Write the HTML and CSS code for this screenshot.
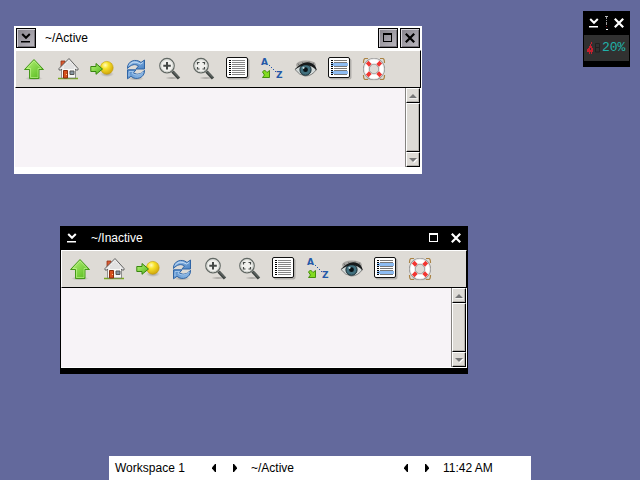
FILE: index.html
```html
<!DOCTYPE html>
<html lang="en">
<head>
<meta charset="utf-8">
<title>Desktop</title>
<link rel="stylesheet" href="styles.css">
</head>
<body>
<svg class="sprites" aria-hidden="true">
  <defs>
    <linearGradient id="green" x1="0" y1="0" x2="1" y2="1"><stop offset="0" stop-color="#b9f57c"/><stop offset="1" stop-color="#4fb516"/></linearGradient>
    <radialGradient id="gold" cx=".38" cy=".3" r=".75"><stop offset="0" stop-color="#fffbc0"/><stop offset=".35" stop-color="#f8e32c"/><stop offset="1" stop-color="#cda008"/></radialGradient>
    <linearGradient id="blue" x1="0" y1="0" x2="1" y2="1"><stop offset="0" stop-color="#9cc4ec"/><stop offset="1" stop-color="#4a83c4"/></linearGradient>
    <radialGradient id="shade"><stop offset="0" stop-color="#000" stop-opacity=".3"/><stop offset="1" stop-color="#000" stop-opacity="0"/></radialGradient>
  </defs>
  <symbol id="up" viewBox="0 0 24 24">
    <ellipse cx="12" cy="21.500" rx="9" ry="2" fill="url(#shade)"/>
    <path d="M12 2.500 21.500 12.500H17V21.500H7.500V12.500H2.500Z" fill="url(#green)" stroke="#45981a" stroke-linejoin="round"/>
    <path d="M12 4 19 11.500H16V20.500H8.500V11.500H5Z" fill="none" stroke="#d4ffa6" stroke-opacity=".5"/>
  </symbol>
  <symbol id="home" viewBox="0 0 24 24">
    <path d="M2 21.500H22" stroke="#79a820" stroke-width="1.500"/>
    <path d="M5 4h4v7H5z" fill="#d85a32" stroke="#913216" stroke-width=".8"/>
    <path d="M5.500 11 12.500 4 19.500 11v10h-14z" fill="#f7f7f5" stroke="#777" stroke-width=".8"/>
    <path d="M13 1.500 3 11.500v1.500h2l8-7.500 7 7.500h2v-1.500z" fill="#e7e7e7" stroke="#555" stroke-width=".9" stroke-linejoin="round"/>
    <path d="M13 3 6 10.500v1.500h13.500v-1.500z" fill="#ededed"/>
    <path d="M11 6v6M13 4v8M15 6v6M17 8v4M9 8v4" stroke="#c8c8c8" stroke-width=".6"/>
    <path d="M7.500 13.500h4v7.500h-4z" fill="#d7501c" stroke="#8c2d0c"/>
    <path d="M14 14h4v3.500h-4z" fill="#8796a2" stroke="#555"/>
    <circle cx="10.500" cy="17.500" r=".6" fill="#ffe49a"/>
  </symbol>
  <symbol id="goto" viewBox="0 0 24 24">
    <ellipse cx="17" cy="17" rx="7" ry="3" fill="url(#shade)"/>
    <circle cx="16.800" cy="10.800" r="6.400" fill="url(#gold)" stroke="#c3a009" stroke-width=".6"/>
    <path d="M.800 9.500H6V6.500L12.500 12 6 17.300V14.500H.800Z" fill="url(#green)" stroke="#38850f" stroke-linejoin="round"/>
  </symbol>
  <symbol id="refresh" viewBox="0 0 24 24">
    <ellipse cx="12" cy="21.500" rx="8" ry="2" fill="url(#shade)"/>
    <path id="curl" d="M3.500 11.500C3 4 12 1 17 5.500L20.500 3V12H12L14.500 9C11 6.500 7 7.500 3.500 11.500Z" fill="url(#blue)" stroke="#2f64a5" stroke-linejoin="round"/>
    <path d="M5 8.500Q9 2.500 16.500 7L19 5.500" fill="none" stroke="#d7e9fb" stroke-width=".8"/>
    <use href="#curl" transform="rotate(180 12 12.400)"/>
    <path d="M5 19V14.500H9.500L8 16.500Q14 20 19 15" fill="none" stroke="#b3d2f2" stroke-width=".8"/>
  </symbol>
  <symbol id="lens" viewBox="0 0 24 24">
    <ellipse cx="14" cy="21" rx="7" ry="1.500" fill="url(#shade)"/>
    <path d="M14.500 14.500 21 21.500" stroke="#3e4441" stroke-width="3.200"/>
    <path d="M15 14.500 21 20.500" stroke="#818986" stroke-width=".8"/>
    <circle cx="9" cy="8.700" r="7.200" fill="#f0f0ed" stroke="#626864" stroke-width="1.300"/>
    <circle cx="9" cy="8.700" r="6.100" fill="none" stroke="#d0d3ce"/>
  </symbol>
  <symbol id="zoom-in" viewBox="0 0 24 24">
    <use href="#lens"/><path d="M9 5v7.500M5.300 8.800h7.500" stroke="#444846" stroke-width="2"/>
  </symbol>
  <symbol id="zoom-fit" viewBox="0 0 24 24">
    <use href="#lens"/><path d="M7.500 5.500h-2v2M10.500 5.500h2v2M5.500 10v2h2M12.500 10v2h-2" fill="none" stroke="#444946" stroke-width="1.200"/>
  </symbol>
  <symbol id="sheet" viewBox="0 0 24 24">
    <rect x="1.500" y="1.500" width="22" height="21" rx="2" fill="#000" opacity=".2"/>
    <rect x=".500" y=".500" width="21" height="20" rx="1.500" fill="#fff" stroke="#111"/>
  </symbol>
  <symbol id="list" viewBox="0 0 24 24">
    <use href="#sheet"/>
    <path d="M3 3.500h2M3 5.500h2M3 7.500h2M3 9.500h2M3 11.500h2M3 13.500h2M3 15.500h2M3 17.500h2" stroke="#000"/>
    <path d="M6 3.500h13M6 5.500h13M6 7.500h13M6 9.500h13M6 11.500h13M6 13.500h13M6 15.500h13M6 17.500h13" stroke="#858585"/>
  </symbol>
  <symbol id="details" viewBox="0 0 24 24">
    <use href="#sheet"/>
    <path d="M3 6h17v3H3zM3 14h17v3H3z" fill="#8dbcf2"/>
    <path d="M3 3.500h2M3 5.500h2M3 7.500h2M3 9.500h2M3 11.500h2M3 13.500h2M3 15.500h2M3 17.500h2" stroke="#000"/>
    <path d="M6 3.500h13M6 5.500h13M6 9.500h13M6 11.500h13M6 13.500h13M6 17.500h13" stroke="#777"/>
  </symbol>
  <symbol id="sort" viewBox="0 0 24 24">
    <path d="M9 8h1v1H9zM11 10h1v1h-1zM13 12h1v1h-1zM15 14h1v1h-1z" fill="#2858a8"/>
    <path d="M2.500 15 4.500 13 7 15.500 9.500 13.500V20.500H2.500L4.500 18Z" fill="#83dc1f" stroke="#458f0d" stroke-linejoin="round"/>
  </symbol>
  <symbol id="eye" viewBox="0 0 24 24">
    <ellipse cx="12" cy="8" rx="10" ry="4.500" fill="#000" opacity=".25"/>
    <path d="M1 12.500Q8 5 16 6.500 20.500 8 22 13 18 19 11 19 5 18 1 12.500Z" fill="#d3dad9" stroke="#666" stroke-width=".8"/>
    <circle cx="11.500" cy="12.700" r="5.600" fill="#42707e" stroke="#172b32"/>
    <circle cx="11.500" cy="12.700" r="2.400" fill="#081014"/>
    <circle cx="9.500" cy="10.800" r="1.100" fill="#c6dce0"/>
    <path d="M.500 12.800Q8 4 15.500 5.500 21.500 6.500 23 13.500 17 7.500 10.500 8.300 6 9 .500 12.800Z" fill="#171a1b"/>
    <path d="M5 8 4 6.500M9 6 8.500 5M15 5.500V4.500M19 7 20 5.500" stroke="#444" stroke-width=".6"/>
  </symbol>
  <symbol id="help" viewBox="0 0 24 24">
    <ellipse cx="12" cy="21.800" rx="10" ry="2" fill="url(#shade)"/>
    <path d="M6 1.500H3Q1.500 2 1.500 6M18 1.500h3Q22.500 2 22.500 6M1.500 18q0 4 1.500 4.500h3M22.500 18q0 4-1.500 4.500h-3" fill="none" stroke="#a98243" stroke-width="1.200"/>
    <circle cx="12" cy="12" r="7.700" fill="none" stroke="#8c8c8c" stroke-width="6.600"/>
    <circle cx="12" cy="12" r="7.700" fill="none" stroke="#e6e6e6" stroke-width="5.400"/>
    <circle cx="12" cy="12" r="7.700" fill="none" stroke="#fff" stroke-width="3.400"/>
    <path d="M5.200 5.200 8.300 8.300M18.800 5.200 15.700 8.300M5.200 18.800 8.300 15.700M18.800 18.800 15.700 15.700" stroke="#f23632" stroke-width="3.800"/>
  </symbol>
  <symbol id="minimize" viewBox="0 0 10 10">
    <path d="M1.200 1 5 4.800 8.800 1" fill="none" stroke="currentColor" stroke-width="2"/>
    <path d="M0 8h9v1.500H0z" fill="currentColor"/>
  </symbol>
  <symbol id="maximize" viewBox="0 0 10 10">
    <path d="M0 0h9v9H0zM1 2v6h7V2z" fill="currentColor" fill-rule="evenodd"/>
  </symbol>
  <symbol id="close" viewBox="0 0 10 10">
    <path d="M.800.800 9.200 9.200M9.200.800.800 9.200" stroke="currentColor" stroke-width="2.200"/>
  </symbol>
  <symbol id="tri-left" viewBox="0 0 10 10"><path d="M7 1v8h-1L3 5.500v-1L6 1z" fill="currentColor"/></symbol>
  <symbol id="tri-right" viewBox="0 0 10 10"><path d="M3 1v8h1L7 5.500v-1L4 1z" fill="currentColor"/></symbol>
  <symbol id="tri-up" viewBox="0 0 10 10"><path d="M1 7.500h9L5.500 3.500" fill="#fff"/><path d="M1 7h8L5 3z" fill="#777"/></symbol>
  <symbol id="tri-down" viewBox="0 0 10 10"><path d="M2 4h8L6 8z" fill="#fff"/><path d="M1 3h8L5 7z" fill="#777"/></symbol>
</svg>

<main class="desktop">
  <section class="window window-active" aria-label="Active">
    <header class="titlebar">
      <button class="control" aria-label="Minimize"><svg><use href="#minimize"/></svg></button>
      <h1 class="title">~/Active</h1>
      <button class="control" aria-label="Maximize"><svg><use href="#maximize"/></svg></button>
      <button class="control" aria-label="Close"><svg><use href="#close"/></svg></button>
    </header>
    <nav class="toolbar" aria-label="Tools">
      <button class="tool" aria-label="Up"><svg><use href="#up"/></svg></button>
      <button class="tool" aria-label="Home"><svg><use href="#home"/></svg></button>
      <button class="tool" aria-label="Bookmarks"><svg><use href="#goto"/></svg></button>
      <button class="tool" aria-label="Refresh"><svg><use href="#refresh"/></svg></button>
      <button class="tool" aria-label="Zoom in"><svg><use href="#zoom-in"/></svg></button>
      <button class="tool" aria-label="Fit"><svg><use href="#zoom-fit"/></svg></button>
      <button class="tool" aria-label="List"><svg><use href="#list"/></svg></button>
      <button class="tool" aria-label="Sort"><svg viewBox="0 0 24 24"><use href="#sort"/><text x="1" y="8" class="sort-letter">A</text><text x="16" y="21" class="sort-letter">Z</text></svg></button>
      <button class="tool" aria-label="Hidden files"><svg><use href="#eye"/></svg></button>
      <button class="tool" aria-label="Details"><svg><use href="#details"/></svg></button>
      <button class="tool" aria-label="Help"><svg><use href="#help"/></svg></button>
    </nav>
    <div class="view">
      <div class="files"></div>
      <div class="scrollbar">
        <button class="step" aria-label="Scroll up"><svg><use href="#tri-up"/></svg></button>
        <div class="thumb"></div>
        <button class="step" aria-label="Scroll down"><svg><use href="#tri-down"/></svg></button>
      </div>
    </div>
  </section>

  <section class="window window-inactive" aria-label="Inactive">
    <header class="titlebar">
      <button class="control" aria-label="Minimize"><svg><use href="#minimize"/></svg></button>
      <h1 class="title">~/Inactive</h1>
      <button class="control" aria-label="Maximize"><svg><use href="#maximize"/></svg></button>
      <button class="control" aria-label="Close"><svg><use href="#close"/></svg></button>
    </header>
    <nav class="toolbar" aria-label="Tools">
      <button class="tool" aria-label="Up"><svg><use href="#up"/></svg></button>
      <button class="tool" aria-label="Home"><svg><use href="#home"/></svg></button>
      <button class="tool" aria-label="Bookmarks"><svg><use href="#goto"/></svg></button>
      <button class="tool" aria-label="Refresh"><svg><use href="#refresh"/></svg></button>
      <button class="tool" aria-label="Zoom in"><svg><use href="#zoom-in"/></svg></button>
      <button class="tool" aria-label="Fit"><svg><use href="#zoom-fit"/></svg></button>
      <button class="tool" aria-label="List"><svg><use href="#list"/></svg></button>
      <button class="tool" aria-label="Sort"><svg viewBox="0 0 24 24"><use href="#sort"/><text x="1" y="8" class="sort-letter">A</text><text x="16" y="21" class="sort-letter">Z</text></svg></button>
      <button class="tool" aria-label="Hidden files"><svg><use href="#eye"/></svg></button>
      <button class="tool" aria-label="Details"><svg><use href="#details"/></svg></button>
      <button class="tool" aria-label="Help"><svg><use href="#help"/></svg></button>
    </nav>
    <div class="view">
      <div class="files"></div>
      <div class="scrollbar">
        <button class="step" aria-label="Scroll up"><svg><use href="#tri-up"/></svg></button>
        <div class="thumb"></div>
        <button class="step" aria-label="Scroll down"><svg><use href="#tri-down"/></svg></button>
      </div>
    </div>
  </section>

  <aside class="slit" aria-label="Battery">
    <div class="slit-head">
      <button class="control" aria-label="Minimize"><svg><use href="#minimize"/></svg></button>
      <svg class="antenna" viewBox="0 0 3 15"><path d="M0 .500h3" stroke="#bbb"/><path d="M1 1h1v2H1zM1 4h1v1H1zM1 6h1v3H1z" fill="#999"/><path d="M1 10h1v1H1z" fill="#822"/><path d="M1 13h2v1H1z" fill="#fff"/></svg>
      <button class="control" aria-label="Close"><svg><use href="#close"/></svg></button>
    </div>
    <div class="battery">
      <svg class="plug" viewBox="0 0 7 12"><path d="M4 0h1v2H4zM3 2h1v2H3zM2 4h3v2h1v4H5v2H4v-2H3v2H2v-2H0V7h1V6h1zM3 6v2h1V6z" fill="#c4202e" fill-rule="evenodd"/></svg>
      <svg class="ghost" viewBox="0 0 8 10"><path d="M1.500.500h4v8.500h-4zM1.500 4.500h4" fill="none" stroke="#202020"/></svg>
      <span class="level">20%</span>
    </div>
  </aside>

  <footer class="taskbar">
    <span class="cell">Workspace 1</span>
    <button class="arrow" aria-label="Previous workspace"><svg><use href="#tri-left"/></svg></button>
    <button class="arrow" aria-label="Next workspace"><svg><use href="#tri-right"/></svg></button>
    <span class="cell">~/Active</span>
    <button class="arrow" aria-label="Previous window"><svg><use href="#tri-left"/></svg></button>
    <button class="arrow" aria-label="Next window"><svg><use href="#tri-right"/></svg></button>
    <time class="cell">11:42 AM</time>
  </footer>
</main>
</body>
</html>
```
FILE: styles.css
```css
* {
  box-sizing: border-box;
}

body {
  margin: 0;
  font: 12px/24px "Liberation Sans", Arial, sans-serif;
  color: #000;
}

button {
  display: grid;
  place-items: center;
  flex: none;
  padding: 0;
  border: 0;
  background: none;
  color: inherit;
}

svg {
  display: block;
  flex: none;
}

.sprites {
  position: absolute;
  width: 0;
  height: 0;
}

.desktop {
  position: relative;
  display: flex;
  align-items: flex-end;
  justify-content: center;
  min-height: 100vh;
  background: #63699c;
}

/* Windows, placed freely on the desktop */
.window {
  position: absolute;
  width: 408px;
  padding: 0 1px 6px;
}

.window-active {
  left: 14px;
  top: 26px;
  background: #fff;
}

.window-inactive {
  left: 60px;
  top: 226px;
  background: #000;
  color: #fff;
}

.titlebar {
  display: flex;
  align-items: center;
  gap: 2px;
  height: 24px;
  padding: 0 1px;
}

.title {
  flex: 1;
  margin: 0;
  padding-left: 7px;
  font-size: 12px;
  font-weight: normal;
}

.control {
  width: 20px;
  height: 20px;
}

.control svg {
  width: 10px;
  height: 10px;
}

.window-active .control {
  border: 1px solid #000;
  box-shadow: inset 1px 1px #d6d3d8, inset -1px -1px #77737a;
  background: linear-gradient(135deg, #85828a, #bbb8bf);
}

.toolbar {
  display: flex;
  height: 38px;
  padding-left: 1px;
  border: 1px solid #000;
  border-top-color: #fff;
  border-left-color: #fff;
  background: #dedbd6;
}

.tool {
  width: 34px;
  height: 36px;
}

.tool svg {
  width: 24px;
  height: 24px;
}

.view {
  display: flex;
  height: 80px;
  border: solid #fff;
  border-width: 0 1px 1px 0;
  background: #f7f3f7;
}

.files {
  flex: 1;
}

.scrollbar {
  display: flex;
  flex-direction: column;
  width: 15px;
  border-left: 1px solid #84827f;
}

.step,
.thumb {
  border: 1px solid #000;
  border-top-color: #fff;
  border-left-color: #fff;
  box-shadow: inset -1px -1px #b5b2ad;
  background: #dedbd6;
}

.step {
  height: 15px;
}

.step svg {
  width: 10px;
  height: 10px;
}

.thumb {
  flex: 1;
}

.sort-letter {
  font: bold 9px "DejaVu Sans", sans-serif;
  fill: #2459a8;
}

/* Battery monitor */
.slit {
  position: absolute;
  top: 11px;
  right: 10px;
  width: 47px;
  padding: 0 1px 6px;
  background: #000;
  color: #fff;
}

.slit-head {
  display: flex;
  align-items: center;
  justify-content: space-between;
  height: 24px;
}

.antenna {
  width: 3px;
  height: 15px;
}

.battery {
  display: flex;
  align-items: center;
  height: 26px;
  padding-left: 3px;
  background: #313131;
}

.plug {
  width: 7px;
  height: 12px;
}

.level {
  font: 13px/26px "Liberation Mono", monospace;
  color: #20b2aa;
}

.ghost {
  width: 8px;
  height: 10px;
}

/* Taskbar */
.taskbar {
  display: grid;
  grid-template-columns: 94px 21px 21px 150px 21px 21px 94px;
  height: 24px;
  background: #fff;
}

.cell {
  padding-left: 6px;
  white-space: nowrap;
}

.arrow svg {
  width: 10px;
  height: 10px;
}
```
